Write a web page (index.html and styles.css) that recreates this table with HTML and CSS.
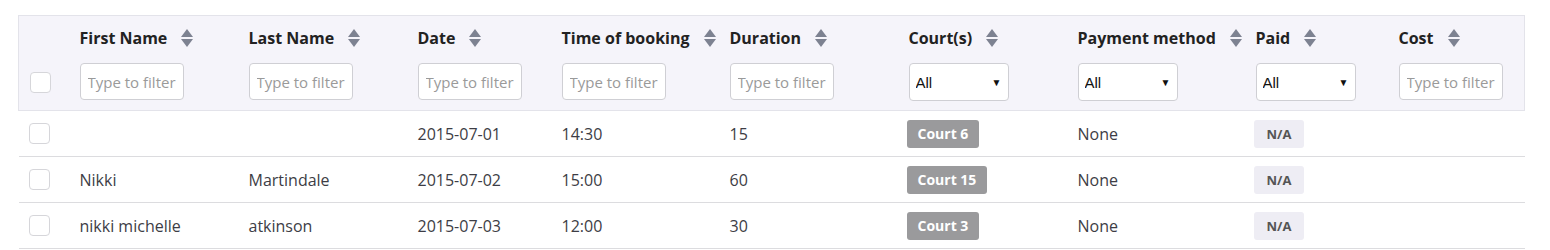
FILE: index.html
```html
<!DOCTYPE html>
<html>
<head>
<meta charset="utf-8">
<link rel="stylesheet" href="styles.css">
</head>
<body>
<div class="wrap">
<table class="grid">
  <colgroup>
    <col class="c0"><col class="c1"><col class="c2"><col class="c3"><col class="c4"><col class="c5"><col class="c6"><col class="c7"><col class="c8"><col class="c9">
  </colgroup>
  <thead>
    <tr>
      <th class="chk-head"><span class="box"></span></th>
      <th><div class="title">First Name<svg class="sort" viewBox="0 0 12 18"><path d="M6 0 L12 8 L0 8 Z"/><path d="M0 10 L12 10 L6 18 Z"/></svg></div><input class="filter" placeholder="Type to filter"></th>
      <th><div class="title">Last Name<svg class="sort" viewBox="0 0 12 18"><path d="M6 0 L12 8 L0 8 Z"/><path d="M0 10 L12 10 L6 18 Z"/></svg></div><input class="filter" placeholder="Type to filter"></th>
      <th><div class="title">Date<svg class="sort" viewBox="0 0 12 18"><path d="M6 0 L12 8 L0 8 Z"/><path d="M0 10 L12 10 L6 18 Z"/></svg></div><input class="filter" placeholder="Type to filter"></th>
      <th><div class="title">Time of booking<svg class="sort" viewBox="0 0 12 18"><path d="M6 0 L12 8 L0 8 Z"/><path d="M0 10 L12 10 L6 18 Z"/></svg></div><input class="filter" placeholder="Type to filter"></th>
      <th><div class="title">Duration<svg class="sort" viewBox="0 0 12 18"><path d="M6 0 L12 8 L0 8 Z"/><path d="M0 10 L12 10 L6 18 Z"/></svg></div><input class="filter" placeholder="Type to filter"></th>
      <th><div class="title">Court(s)<svg class="sort" viewBox="0 0 12 18"><path d="M6 0 L12 8 L0 8 Z"/><path d="M0 10 L12 10 L6 18 Z"/></svg></div><div class="sel"><select><option>All</option></select><span class="arrow">▼</span></div></th>
      <th><div class="title">Payment method<svg class="sort" viewBox="0 0 12 18"><path d="M6 0 L12 8 L0 8 Z"/><path d="M0 10 L12 10 L6 18 Z"/></svg></div><div class="sel"><select><option>All</option></select><span class="arrow">▼</span></div></th>
      <th><div class="title">Paid<svg class="sort" viewBox="0 0 12 18"><path d="M6 0 L12 8 L0 8 Z"/><path d="M0 10 L12 10 L6 18 Z"/></svg></div><div class="sel"><select><option>All</option></select><span class="arrow">▼</span></div></th>
      <th><div class="title">Cost<svg class="sort" viewBox="0 0 12 18"><path d="M6 0 L12 8 L0 8 Z"/><path d="M0 10 L12 10 L6 18 Z"/></svg></div><input class="filter" placeholder="Type to filter"></th>
    </tr>
  </thead>
  <tbody>
    <tr>
      <td class="chk"><span class="box"></span></td>
      <td></td><td></td><td>2015-07-01</td><td>14:30</td><td>15</td>
      <td><span class="court">Court 6</span></td><td>None</td><td><span class="na">N/A</span></td><td></td>
    </tr>
    <tr>
      <td class="chk"><span class="box"></span></td>
      <td>Nikki</td><td>Martindale</td><td>2015-07-02</td><td>15:00</td><td>60</td>
      <td><span class="court">Court 15</span></td><td>None</td><td><span class="na">N/A</span></td><td></td>
    </tr>
    <tr>
      <td class="chk"><span class="box"></span></td>
      <td>nikki michelle</td><td>atkinson</td><td>2015-07-03</td><td>12:00</td><td>30</td>
      <td><span class="court">Court 3</span></td><td>None</td><td><span class="na">N/A</span></td><td></td>
    </tr>
  </tbody>
</table>
</div>
</body>
</html>
```
FILE: styles.css
```css
* { box-sizing: border-box; }
body {
  margin: 0;
  background: #fff;
  font-family: "Open Sans", "Noto Sans", sans-serif;
  color: #3a3a3a;
}
.wrap {
  padding: 15px 26px 0 18px;
}
.grid {
  width: 1506px;
  table-layout: fixed;
  border-collapse: collapse;
}
.c0 { width: 61px; }
.c1 { width: 169px; }
.c2 { width: 169px; }
.c3 { width: 144px; }
.c4 { width: 168px; }
.c5 { width: 179px; }
.c6 { width: 169px; }
.c7 { width: 178px; }
.c8 { width: 143px; }
.c9 { width: 126px; }

thead tr {
  background: #f5f4fa;
  border: 1px solid #e3e3ea;
}
th {
  text-align: left;
  vertical-align: top;
  padding: 12px 0 9px 0;
  font-weight: 700;
}
.title {
  display: flex;
  align-items: center;
  height: 20px;
  font-size: 16px;
  color: #222;
  white-space: nowrap;
  margin-bottom: 15px;
}
.sort {
  width: 12px;
  height: 18px;
  margin-left: 14px;
  fill: #7d8291;
  flex: none;
}
.filter {
  width: 104px;
  height: 37px;
  border: 1px solid #cfcfd4;
  border-radius: 4px;
  background: #fff;
  font-family: "Open Sans", sans-serif;
  font-size: 15px;
  padding: 0 7px;
  color: #333;
  display: block;
}
.filter::placeholder { color: #9a9a9a; }
.sel {
  position: relative;
  width: 100px;
  height: 38px;
}
.sel select {
  appearance: none;
  -webkit-appearance: none;
  width: 100%;
  height: 100%;
  border: 1px solid #cfcfd4;
  border-radius: 4px;
  background: #fff;
  font-family: "Liberation Sans", Arial, sans-serif;
  font-size: 15px;
  color: #111;
  padding: 0 0 0 6px;
}
.arrow {
  position: absolute;
  right: 7px;
  top: 12px;
  font-size: 10px;
  color: #111;
  pointer-events: none;
}
.chk-head {
  padding-top: 56px;
}
.chk-head .box {
  margin-left: 11px;
}
.box {
  display: block;
  width: 21px;
  height: 21px;
  border: 1px solid #d6d6da;
  border-radius: 4px;
  background: #fff;
}
td {
  height: 46px;
  border-bottom: 1px solid #dcdcdf;
  font-size: 16px;
  color: #3d3d45;
  padding: 0;
  vertical-align: middle;
  white-space: nowrap;
}
td.chk .box {
  margin-left: 10px;
}
.court {
  display: inline-block;
  margin-left: -2px;
  background: #9a9a9c;
  color: #fff;
  font-weight: 700;
  font-size: 14px;
  line-height: 28px;
  padding: 0 11px;
  border-radius: 3px;
}
.na {
  display: inline-block;
  margin-left: -2px;
  background: #eeedf4;
  color: #555;
  font-weight: 700;
  font-size: 13px;
  line-height: 28px;
  padding: 0 13px;
  border-radius: 3px;
}
```
